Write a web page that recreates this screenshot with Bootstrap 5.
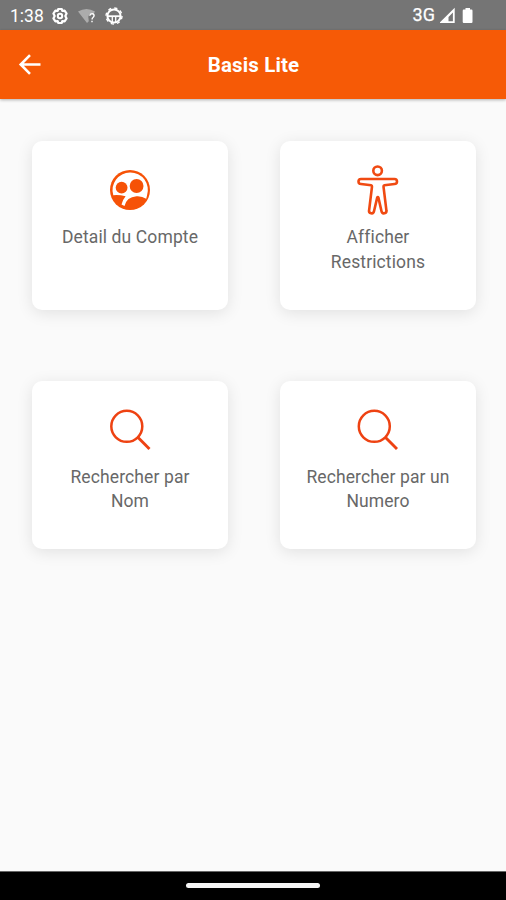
<!DOCTYPE html>
<html lang="fr">
<head>
<meta charset="utf-8">
<meta name="viewport" content="width=device-width, initial-scale=1">
<title>Basis Lite</title>
<link rel="stylesheet" href="https://cdn.jsdelivr.net/npm/bootstrap@5.3.0/dist/css/bootstrap.min.css">
<style>
  body { font-family: Roboto, "Liberation Sans", sans-serif; background: #fafafa; height: 900px; }
  svg { display: block; flex: none; }
  .status { height: 30px; background: #757575; color: #fff; padding: 1px 32px 0 10px; font-size: 17.5px; line-height: 30px; }
  .status .clock { margin-right: 7px; }
  .status .net { font-size: 18px; line-height: 28px; padding-bottom: 1px; margin-right: 5px; -webkit-text-stroke: .25px #fff; }
  .topbar { height: 69px; background: #f65a06; color: #fff; padding: 0 17px; box-shadow: 0 1px 3px rgba(0,0,0,.3); }
  .topbar h1 { font-size: 20.5px; font-weight: 700; letter-spacing: .15px; padding-left: 1px; padding-top: 1px; }
  .topbar .side { width: 26px; }
  .tiles { display: grid; grid-template-columns: 196px 196px; column-gap: 52px; row-gap: 71px; padding: 42px 30px 0 32px; }
  .tile { height: 168.5px; border-radius: 10px; padding: 23px 20px 0; color: #686868; box-shadow: 0 3px 16px rgba(0,0,0,.1); }
  .tile p { margin: 9px 0 0; font-size: 17.5px; line-height: 24.5px; letter-spacing: .12px; }
  .navarea { height: 29px; background: #000; border-top: 1px solid #666; padding-bottom: 1px; }
  .handle { width: 134px; height: 5px; border-radius: 3px; background: #f5f5f5; }
</style>
</head>
<body class="d-flex flex-column overflow-hidden">
<div class="status d-flex align-items-center justify-content-between">
  <div class="d-flex align-items-center">
    <span class="clock">1:38</span>
    <svg width="18" height="18" viewBox="0 0 18 18" fill="none" stroke="#fff">
      <path stroke-width="2.200" stroke-linejoin="round" d="M7.200 2h3.600l.5 1.900 2.300-.3 2 3L14.300 9l1.300 2.400-2 3-2.300-.3-.5 1.900H7.200l-.5-1.900-2.300.3-2-3L3.700 9 2.400 6.600l2-3 2.300.3z"/>
      <circle cx="9" cy="9" r="2.200" stroke-width="2"/>
    </svg>
    <svg class="ms-2" width="20" height="18" viewBox="0 0 20 18">
      <path fill="#fff" opacity=".4" d="M1 4.600Q9.500-.5 18 4.600L16.500 7Q12 6 11.300 10l.5 4.200L10 16z"/>
      <path fill="none" stroke="#fff" stroke-width="1.400" d="M12.800 8.700q.2-1.900 2.200-1.900t2.100 1.800q0 1-1.100 1.900-.9.700-.9 1.900M15 13.700v1.600"/>
    </svg>
    <svg width="18" height="18" class="ms-2" viewBox="0 0 18 18" fill="none" stroke="#fff">
      <circle cx="9" cy="9" r="6.600" stroke-width="2"/>
      <circle cx="9" cy="9" r="8" stroke-width="1.400" stroke-dasharray="3.200 3.083"/>
      <path stroke-width="1.800" d="M3 9.200h12"/>
      <path stroke-width="1.300" d="M7.300 9v6M10.700 9v6"/>
    </svg>
  </div>
  <div class="d-flex align-items-center">
    <span class="net">3G</span>
    <svg width="18" height="17" viewBox="0 0 18 17">
      <path fill="#fff" fill-rule="evenodd" d="M-.7 16 14.700.8V16zM8.500 14.200h4.400V5.500L8.500 10z"/>
    </svg>
    <svg width="16" height="17" viewBox="0 0 16 17">
      <path fill="#fff" d="M7.500 1h4.500v1.500h1.500q1 0 1 1.200v11.100Q14.500 16 13.500 16H5.800Q4.700 16 4.700 14.800V3.700q0-1.200 1.100-1.200h1.700z"/>
    </svg>
  </div>
</div>
<header class="topbar d-flex align-items-center justify-content-between">
  <a class="side" href="#" aria-label="Retour">
    <svg width="26" height="24" viewBox="0 0 26 24" fill="none" stroke="#fff" stroke-width="2.600">
      <path d="M23.500 11.500H4M13 2.200 3.700 11.500 13 20.800"/>
    </svg>
  </a>
  <h1 class="m-0">Basis Lite</h1>
  <span class="side"></span>
</header>
<main class="tiles">
  <div class="tile bg-white d-flex flex-column align-items-center text-center">
    <svg width="52" height="52" viewBox="0 0 52 52">
      <circle cx="26" cy="26" r="20" fill="#f65207"/>
      <path fill="#fff" d="M26 8.500A17.500 17.500 0 0 1 43 31.500l-.8 3.200Q38 31.800 32.500 32.200 22.500 33 20.500 42L17.500 40.500Q18.500 36 21.600 32.300 15 30.500 9.300 31.200A17.500 17.500 0 0 1 26 8.500z"/>
      <circle cx="17.600" cy="23.700" r="5.900" fill="#f65207"/>
      <circle cx="32.600" cy="22" r="6.900" fill="#f65207"/>
    </svg>
    <p>Detail du Compte</p>
  </div>
  <div class="tile bg-white d-flex flex-column align-items-center text-center">
    <svg width="52" height="52" viewBox="0 0 52 52" fill="none" stroke="#f04a12" stroke-width="2.600" stroke-linejoin="round">
      <circle cx="25.600" cy="6.800" r="4.300"/>
      <path d="M9 15h33.500a2.500 2.500 0 0 1 0 5L32.300 21.200q-.9.200-.8 1.400L34.400 46.300a2.500 2.500 0 0 1-4.900 1L26.400 33.600q-.6-1.200-1.200 0L22 47.300a2.500 2.500 0 0 1-4.900-1L20 22.600q.1-1.200-.8-1.400L9 20a2.500 2.500 0 0 1 0-5z"/>
    </svg>
    <p>Afficher<br>Restrictions</p>
  </div>
  <div class="tile bg-white d-flex flex-column align-items-center text-center">
    <svg width="52" height="52" viewBox="0 0 52 52" fill="none" stroke="#ee4212" stroke-width="2.500">
      <circle cx="22.800" cy="22.300" r="15.500"/>
      <path stroke-width="2.900" d="m33.800 33.300 11.700 11.700"/>
    </svg>
    <p>Rechercher par<br>Nom</p>
  </div>
  <div class="tile bg-white d-flex flex-column align-items-center text-center">
    <svg width="52" height="52" viewBox="0 0 52 52" fill="none" stroke="#ee4212" stroke-width="2.500">
      <circle cx="22.300" cy="22.300" r="15.500"/>
      <path stroke-width="2.900" d="m33.300 33.300 11.700 11.700"/>
    </svg>
    <p class="text-nowrap">Rechercher par un<br>Numero</p>
  </div>
</main>
<footer class="navarea mt-auto d-flex align-items-center justify-content-center">
  <div class="handle"></div>
</footer>
<script src="https://cdn.jsdelivr.net/npm/bootstrap@5.3.0/dist/js/bootstrap.bundle.min.js"></script>
</body>
</html>
